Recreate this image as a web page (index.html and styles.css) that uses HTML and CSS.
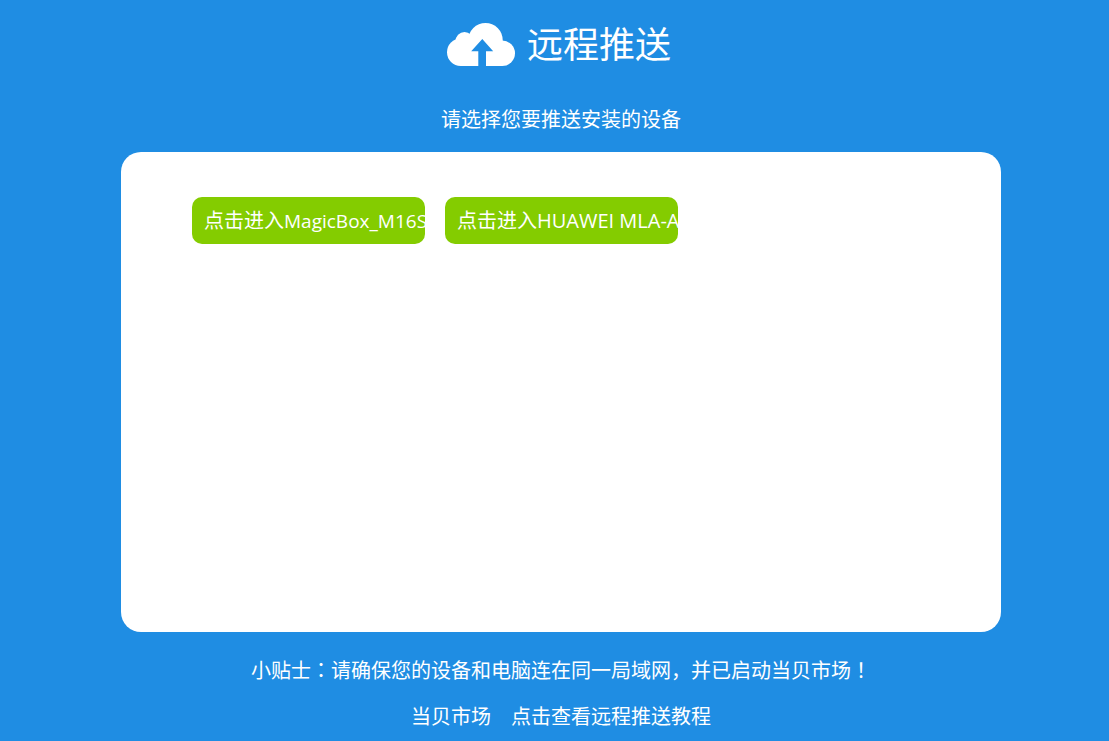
FILE: index.html
```html
<!DOCTYPE html>
<html lang="zh-CN">
<head>
<meta charset="utf-8">
<title>远程推送</title>
<link rel="stylesheet" href="styles.css">
</head>
<body>
<header class="header">
  <svg class="logo" width="68" height="43" viewBox="0 0 68 43" aria-hidden="true">
    <g fill="#fff">
      <circle cx="13.7" cy="29.3" r="13.7"/>
      <circle cx="17.5" cy="18" r="9"/>
      <circle cx="38.5" cy="17.2" r="17.2"/>
      <circle cx="55.3" cy="30.3" r="12.7"/>
      <path d="M13.7 20H55.3V43H13.7z"/>
    </g>
    <path class="logo-arrow" d="M35.3 16L46.2 28.2H39V43H31.3V28.2H24.2z"/>
  </svg>
  <h1 class="title">远程推送</h1>
</header>
<main class="main">
  <p class="hint">请选择您要推送安装的设备</p>
  <section class="panel">
    <button class="device" type="button">点击进入<span class="model">MagicBox_M16S</span></button>
    <button class="device" type="button">点击进入HUAWEI MLA-A</button>
  </section>
</main>
<footer class="footer">
  <p class="line">小贴士<span class="mark" lang="ja">：</span>请确保您的设备和电脑连在同一局域网，并已启动当贝市场<span class="mark" lang="ja">！</span></p>
  <nav class="links">
    <a class="link" href="#">当贝市场</a>
    <a class="link" href="#">点击查看远程推送教程</a>
  </nav>
</footer>
</body>
</html>
```
FILE: styles.css
```css
* {
  box-sizing: border-box;
}

body {
  margin: 0;
  padding: 19px 0 0 13px;
  background: #1f8de3;
  color: #fff;
  font: 20px/30px "Open Sans", "Noto Sans CJK SC", sans-serif;
}

.header {
  display: flex;
  justify-content: center;
  align-items: center;
  gap: 12px;
  padding-right: 4px;
}

.logo-arrow {
  fill: #1f8de3;
}

.title {
  margin: 0;
  padding-top: 2px;
  font-size: 36px;
  font-weight: 400;
  line-height: 48px;
}

.hint {
  margin: 36px 0 17px;
  text-align: center;
}

.panel {
  display: flex;
  flex-wrap: wrap;
  align-content: flex-start;
  gap: 20px;
  max-width: 880px;
  min-height: 480px;
  margin: 0 auto;
  padding: 45px 71px;
  border-radius: 20px;
  background: #fff;
}

.device {
  width: 233px;
  height: 47px;
  padding: 0 0 0 12px;
  border: 0;
  border-radius: 10px;
  background: #84cc00;
  color: inherit;
  font: inherit;
  text-align: left;
  white-space: nowrap;
  overflow: hidden;
  cursor: pointer;
}

.model {
  font-size: 19px;
}

.footer {
  padding-top: 23px;
  text-align: center;
}

.line {
  margin: 0 0 16px;
}

.mark {
  font-family: "Noto Sans CJK JP", sans-serif;
}

.links {
  display: flex;
  justify-content: center;
  gap: 20px;
}

.link {
  color: inherit;
  text-decoration: none;
}
```
